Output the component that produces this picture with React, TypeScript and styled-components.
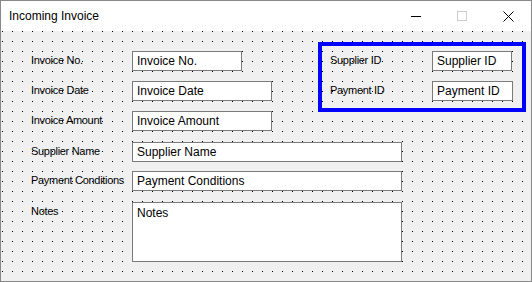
import styled, { createGlobalStyle } from "styled-components"

const GlobalStyle = createGlobalStyle`
  html, body {
    margin: 0;
    padding: 0;
    background: #ffffff;
  }
`

const Window = styled.div`
  width: 532px;
  height: 282px;
  box-sizing: border-box;
  border: 1px solid #888888;
  display: flex;
  flex-direction: column;
  font-family: "Liberation Sans", Arial, sans-serif;
  color: #000000;
  overflow: hidden;
`

const TitleBar = styled.div`
  height: 30px;
  flex: none;
  display: flex;
  align-items: center;
  background: #ffffff;
`

const Title = styled.div`
  flex: 1;
  padding-left: 8px;
  font-size: 12px;
  line-height: 14px;
`

const CaptionButton = styled.div`
  width: 46px;
  height: 30px;
  display: flex;
  align-items: center;
  justify-content: center;
`

const Client = styled.div`
  flex: 1;
  background-color: #f0f0f0;
  background-image: conic-gradient(at 1px 1px, transparent 75%, #000000 0);
  background-size: 10px 10px;
  background-position: 1px 0;
  padding: 11px 0 0 30px;
  display: flex;
  flex-direction: column;
`

const TopSection = styled.div`
  display: flex;
  align-items: flex-start;
  height: 89px;
`

const Column = styled.div<{ $top?: number; $gap?: number }>`
  display: flex;
  flex-direction: column;
  gap: ${(p) => p.$gap ?? 10}px;
  margin-top: ${(p) => p.$top ?? 0}px;
`

const Row = styled.div<{ $top?: number }>`
  display: flex;
  align-items: flex-start;
  margin-top: ${(p) => p.$top ?? 0}px;
`

const Label = styled.div<{ $w: number }>`
  width: ${(p) => p.$w}px;
  flex: none;
  padding-top: 3px;
  font-size: 11px;
  letter-spacing: -0.3px;
  line-height: 13px;
  white-space: nowrap;
`

const TextBox = styled.div<{ $w: number; $h?: number; $multi?: boolean }>`
  width: ${(p) => p.$w}px;
  height: ${(p) => p.$h ?? 20}px;
  box-sizing: border-box;
  border: 1px solid #7a7a7a;
  background: #ffffff;
  padding: ${(p) => (p.$multi ? "3px 4px 0" : "0 4px")};
  display: flex;
  align-items: ${(p) => (p.$multi ? "flex-start" : "center")};
  font-size: 12px;
  line-height: 14px;
  white-space: nowrap;
  overflow: hidden;
`

const GroupPanel = styled.div`
  width: 208px;
  height: 70px;
  box-sizing: border-box;
  margin-left: 46px;
  border: 4px solid #0000ff;
  padding: 5px 0 0 8px;
`

function MinimizeIcon() {
  return (
    <svg width="10" height="10" viewBox="0 0 10 10">
      <path d="M0 5.5H10" stroke="#000" strokeWidth="1" />
    </svg>
  )
}

function MaximizeIcon() {
  return (
    <svg width="10" height="10" viewBox="0 0 10 10">
      <rect x="0.5" y="0.5" width="9" height="9" fill="none" stroke="#cccccc" strokeWidth="1" />
    </svg>
  )
}

function CloseIcon() {
  return (
    <svg width="11" height="11" viewBox="0 0 11 11">
      <path d="M0.5 0.5L10.5 10.5M10.5 0.5L0.5 10.5" stroke="#000" strokeWidth="1" />
    </svg>
  )
}

export default function App() {
  return (
    <>
      <GlobalStyle />
      <Window>
        <TitleBar>
          <Title>Incoming Invoice</Title>
          <CaptionButton>
            <MinimizeIcon />
          </CaptionButton>
          <CaptionButton>
            <MaximizeIcon />
          </CaptionButton>
          <CaptionButton>
            <CloseIcon />
          </CaptionButton>
        </TitleBar>
        <Client>
          <TopSection>
            <Column $top={9}>
              <Row>
                <Label $w={101}>Invoice No.</Label>
                <TextBox $w={110}>Invoice No.</TextBox>
              </Row>
              <Row>
                <Label $w={101}>Invoice Date</Label>
                <TextBox $w={140}>Invoice Date</TextBox>
              </Row>
              <Row>
                <Label $w={101}>Invoice Amount</Label>
                <TextBox $w={140}>Invoice Amount</TextBox>
              </Row>
            </Column>
            <GroupPanel>
              <Column>
                <Row>
                  <Label $w={102}>Supplier ID</Label>
                  <TextBox $w={80}>Supplier ID</TextBox>
                </Row>
                <Row>
                  <Label $w={102}>Payment ID</Label>
                  <TextBox $w={81}>Payment ID</TextBox>
                </Row>
              </Column>
            </GroupPanel>
          </TopSection>
          <Row $top={11}>
            <Label $w={101}>Supplier Name</Label>
            <TextBox $w={270}>Supplier Name</TextBox>
          </Row>
          <Row $top={9}>
            <Label $w={101}>Payment Conditions</Label>
            <TextBox $w={270}>Payment Conditions</TextBox>
          </Row>
          <Row $top={11}>
            <Label $w={101}>Notes</Label>
            <TextBox $w={270} $h={60} $multi>
              Notes
            </TextBox>
          </Row>
        </Client>
      </Window>
    </>
  )
}
